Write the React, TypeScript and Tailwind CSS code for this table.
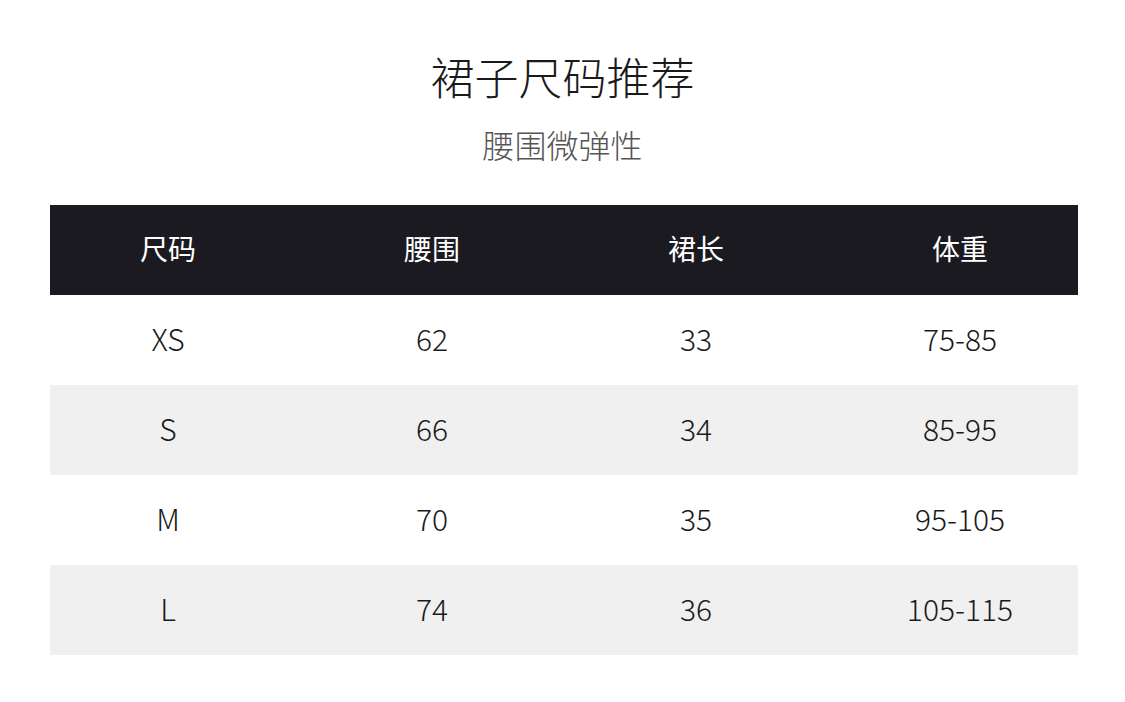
import React from 'react';

const rows = [
  ['XS', '62', '33', '75-85'],
  ['S', '66', '34', '85-95'],
  ['M', '70', '35', '95-105'],
  ['L', '74', '36', '105-115'],
];

const headers = ['尺码', '腰围', '裙长', '体重'];

export default function App() {
  return (
    <div
      className="w-[1125px] h-[702px] bg-white overflow-hidden"
      style={{ fontFamily: '"Noto Sans CJK SC", "Noto Sans", sans-serif' }}
    >
      {/* Title */}
      <div className="flex flex-col items-center pt-[48px]">
        <h1 className="text-[44px] leading-[56px] font-light text-[#1a1a1a]">裙子尺码推荐</h1>
        <p className="mt-[20px] text-[32px] leading-[40px] font-light text-[#555]">腰围微弹性</p>
      </div>

      {/* Table */}
      <div className="mx-[50px] mt-[41px] w-[1028px]">
        <div className="h-[90px] pb-[4px] bg-[#1a1a20] flex items-center">
          <div className="-ml-[14px] w-[1056px] shrink-0 grid grid-cols-4 text-white text-[28px]">
            {headers.map((h) => (
              <div key={h} className="text-center">{h}</div>
            ))}
          </div>
        </div>
        {rows.map((r, i) => (
          <div
            key={r[0]}
            className={`h-[90px] pb-[4px] flex items-center ${i % 2 === 1 ? 'bg-[#f0f0f0]' : 'bg-white'}`}
          >
            <div className="-ml-[14px] w-[1056px] shrink-0 grid grid-cols-4 text-[#1a1a1a] text-[30px] font-light">
              {r.map((c, j) => (
                <div key={j} className="text-center">{c}</div>
              ))}
            </div>
          </div>
        ))}
      </div>
    </div>
  );
}
